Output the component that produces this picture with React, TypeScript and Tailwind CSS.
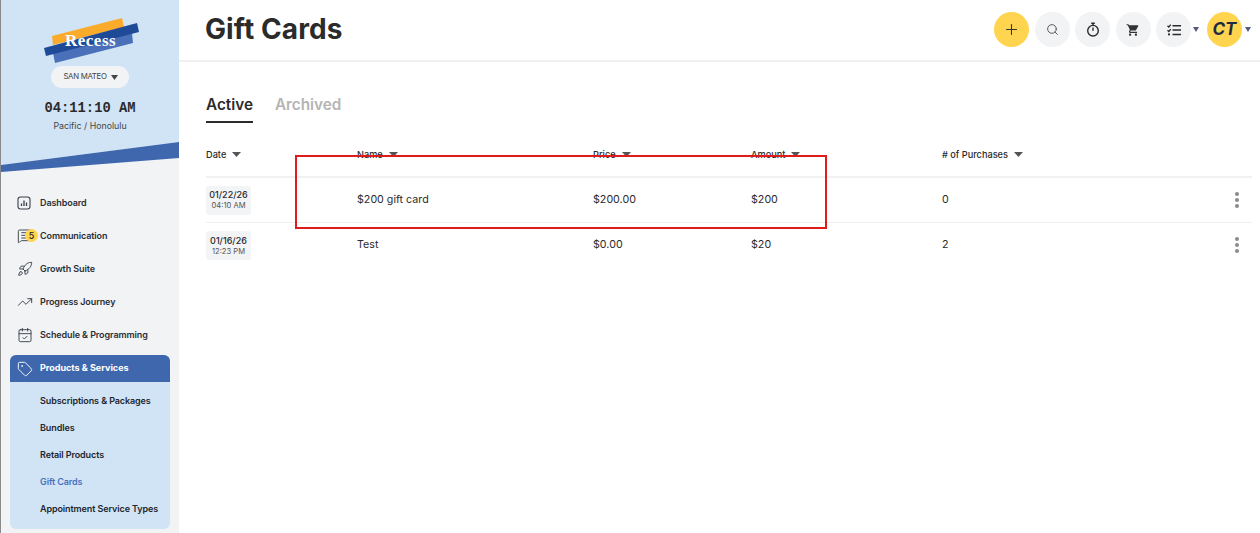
import { MessageSquareText, Plus, Rocket, Search, Tag, TrendingUp, CalendarCheck } from 'lucide-react';
import { MdShoppingCart } from 'react-icons/md';
import type { ReactNode } from 'react';

interface CardRow {
  date: string;
  time: string;
  name: string;
  price: string;
  amount: string;
  purchases: string;
}

const rows: CardRow[] = [
  { date: '01/22/26', time: '04:10 AM', name: '$200 gift card', price: '$200.00', amount: '$200', purchases: '0' },
  { date: '01/16/26', time: '12:23 PM', name: 'Test', price: '$0.00', amount: '$20', purchases: '2' },
];

const subItems = ['Subscriptions & Packages', 'Bundles', 'Retail Products', 'Gift Cards', 'Appointment Service Types'];

function DashboardIcon() {
  return (
    <svg width="14" height="14" viewBox="0 0 14 14" fill="none" stroke="#3a3f47" strokeWidth="1.1">
      <rect x="1" y="1" width="12" height="12" rx="2.5" />
      <path d="M4.5 10V7.5M7 10V4.5M9.5 10V6.5" strokeWidth="1.3" />
    </svg>
  );
}

function StopwatchIcon() {
  return (
    <svg width="14" height="15" viewBox="0 0 14 15" fill="none" stroke="#2b2b2b" strokeWidth="1.4">
      <circle cx="7" cy="8.7" r="5.3" />
      <path d="M5.2 1.2h3.6M7 1.2v2.2M7 8.7V5.6" />
    </svg>
  );
}

function ChecklistIcon() {
  return (
    <svg width="14" height="12" viewBox="0 0 14 12" fill="none" stroke="#2b2b2b" strokeWidth="1.3">
      <path d="M0.5 1.8 1.8 3 3.8 0.6M0.5 6.3 1.8 7.5 3.8 5.1" />
      <path d="M5.5 1.8H14M5.5 6H14M5.5 10.4H14" strokeWidth="1.5" />
      <circle cx="2" cy="10.4" r="1.1" fill="#2b2b2b" stroke="none" />
    </svg>
  );
}

function Caret({ className }: { className: string }) {
  return (
    <svg width="9" height="5" viewBox="0 0 8 4" className={className} preserveAspectRatio="none">
      <path d="M0 0h8L4 4z" fill="currentColor" />
    </svg>
  );
}

function NavItem({ icon, label, badge }: { icon: ReactNode; label: string; badge?: string }) {
  return (
    <div className="relative flex h-[33px] items-center pl-[16px]">
      <span className="flex w-[23px] items-center">{icon}</span>
      <span className="text-[9px] font-semibold tracking-[-0.1px] text-[#2b2f36]">{label}</span>
      {badge && (
        <span className="absolute left-[24px] top-[10px] flex h-[13px] w-[13px] items-center justify-center rounded-full bg-[#ffd44f] text-[9px] font-medium text-[#222]">
          {badge}
        </span>
      )}
    </div>
  );
}

function RoundButton({ children, yellow }: { children: ReactNode; yellow?: boolean }) {
  return (
    <div
      className={`flex h-[35px] w-[35px] items-center justify-center rounded-full ${yellow ? 'bg-[#ffd44f]' : 'bg-[#f2f3f5]'}`}
    >
      {children}
    </div>
  );
}

function HeaderCell({ label }: { label: string }) {
  return (
    <div className="flex items-center gap-[6px]">
      <span className="text-[9.2px] font-medium text-[#2b2b2b]">{label}</span>
      <Caret className="text-[#555]" />
    </div>
  );
}

export default function App() {
  return (
    <div className="flex h-[533px] w-[1260px] overflow-hidden bg-white font-['Inter',sans-serif] text-[#2b2b2b]">
      <aside className="flex h-full w-[179px] shrink-0 flex-col border-l border-[#8a8a8a] bg-[#f1f3f5]">
        <div className="shrink-0 bg-[#d1e4f6]">
          <div className="flex h-[142px] flex-col items-center">
            <div className="relative ml-[2px] mt-[17px] h-[47px] w-[96px]">
              <svg width="96" height="47" viewBox="43 17 96 47" className="block">
                <path d="M52 36 122 18 124 27 53 45z" fill="#fbab2c" />
                <path d="M53 53 132 33 133 43 55 63z" fill="#4a70b9" />
                <path d="M44 48 137 23 139 32 46 56z" fill="#1e4a97" />
              </svg>
              <span className="absolute left-[22px] top-[15px] font-['Liberation_Serif',serif] text-[17px] font-bold leading-none tracking-[0.5px] text-white">
                Recess
              </span>
            </div>
            <div className="mt-[2px] flex h-[22px] w-[78px] items-center justify-center gap-[4px] rounded-full bg-[#f1f3f5] pl-[1px]">
              <span className="text-[7.8px] tracking-[-0.3px] text-[#444]">SAN MATEO</span>
              <Caret className="w-[7px] text-[#444]" />
            </div>
            <div className="mt-[12px] font-['Liberation_Mono',monospace] text-[13.8px] font-bold leading-[18px] text-[#2b2b2b]">
              04:11:10 AM
            </div>
            <div className="mt-[2px] text-[8.8px] leading-[12px] text-[#444]">Pacific / Honolulu</div>
          </div>
          <svg width="178" height="30" viewBox="0 0 178 30" className="block">
            <path d="M0 30V23L178 0V30z" fill="#f1f3f5" />
            <path d="M0 23 178 0V16L0 30z" fill="#3f67ae" />
          </svg>
        </div>

        <nav className="mt-[14px] flex flex-col">
          <NavItem icon={<DashboardIcon />} label="Dashboard" />
          <NavItem icon={<MessageSquareText size={16} strokeWidth={1.4} color="#3a3f47" />} label="Communication" badge="5" />
          <NavItem icon={<Rocket size={16} strokeWidth={1.4} color="#3a3f47" />} label="Growth Suite" />
          <NavItem icon={<TrendingUp size={16} strokeWidth={1.4} color="#3a3f47" />} label="Progress Journey" />
          <NavItem icon={<CalendarCheck size={16} strokeWidth={1.4} color="#3a3f47" />} label="Schedule & Programming" />
        </nav>

        <div className="ml-[9px] mt-[4px] w-[160px] overflow-hidden rounded-[6px] bg-[#d1e4f6]">
          <div className="flex h-[27px] items-center bg-[#3f67ae] pl-[7px] text-white">
            <span className="flex w-[23px] items-center">
              <Tag size={16} strokeWidth={1.4} />
            </span>
            <span className="pb-[1px] text-[9px] font-bold">Products &amp; Services</span>
          </div>
          <div className="flex flex-col pb-[7px] pt-[5px]">
            {subItems.map((item) => (
              <div
                key={item}
                className={`flex h-[27px] items-center pl-[30px] text-[9px] font-semibold tracking-[-0.1px] ${item === 'Gift Cards' ? 'text-[#4a70b9]' : 'text-[#22262c]'}`}
              >
                {item}
              </div>
            ))}
          </div>
        </div>
      </aside>

      <main className="relative min-w-0 flex-1">
        <header className="flex h-[62px] items-center justify-between border-b-2 border-[#f0f0f0] pl-[26px] pr-[9px]">
          <h1 className="pb-[2px] text-[28px] font-bold tracking-[0.1px] text-[#2b2b2b]">Gift Cards</h1>
          <div className="flex items-center pb-[1px]">
            <div className="flex items-center gap-[5.5px]">
              <RoundButton yellow>
                <Plus size={17} strokeWidth={1.5} color="#333" />
              </RoundButton>
              <RoundButton>
                <Search size={13} strokeWidth={1.6} color="#444" />
              </RoundButton>
              <RoundButton>
                <StopwatchIcon />
              </RoundButton>
              <RoundButton>
                <MdShoppingCart size={14} color="#333" />
              </RoundButton>
              <RoundButton>
                <ChecklistIcon />
              </RoundButton>
            </div>
            <Caret className="ml-[2px] w-[6px] text-[#555a80]" />
            <div className="ml-[8px]">
              <div className="flex h-[35px] w-[35px] items-center justify-center rounded-full bg-[#ffd44f] text-[17px] font-bold italic text-[#1e2a44]">
                CT
              </div>
            </div>
            <Caret className="ml-[3px] w-[6px] text-[#555a80]" />
          </div>
        </header>

        <div className="pl-[27px] pr-[8px]">
          <div className="mt-[31px] flex gap-[22px]">
            <div className="border-b-2 border-[#2b2b2b] pb-[5px] text-[15.3px] font-semibold leading-[23px]">Active</div>
            <div className="text-[15.3px] font-semibold leading-[23px] text-[#b4b4b4]">Archived</div>
          </div>

          <div className="mt-[21px] grid h-[32px] grid-cols-[151px_236px_158px_191px_1fr] items-center pb-[10px]">
            <HeaderCell label="Date" />
            <HeaderCell label="Name" />
            <HeaderCell label="Price" />
            <HeaderCell label="Amount" />
            <HeaderCell label="# of Purchases" />
          </div>
          <div className="border-t-2 border-[#f1f1f1]">
            {rows.map((row, i) => (
              <div
                key={row.date}
                className={`grid h-[45px] grid-cols-[151px_236px_158px_191px_1fr] items-center text-[10.7px] ${i === 0 ? 'border-b border-[#efefef]' : ''}`}
              >
                <div className="flex h-[29px] w-[45px] flex-col items-center justify-center rounded-[3px] bg-[#f3f4f6]">
                  <span className="text-[9px] font-medium leading-[11px]">{row.date}</span>
                  <span className="text-[7.6px] leading-[11px] text-[#555]">{row.time}</span>
                </div>
                <div>{row.name}</div>
                <div>{row.price}</div>
                <div>{row.amount}</div>
                <div className="flex items-center justify-between pr-[13px]">
                  <span>{row.purchases}</span>
                  <span className="flex flex-col gap-[2px]">
                    <span className="h-[4px] w-[4px] rounded-full bg-[#8b8b8b]" />
                    <span className="h-[4px] w-[4px] rounded-full bg-[#8b8b8b]" />
                    <span className="h-[4px] w-[4px] rounded-full bg-[#8b8b8b]" />
                  </span>
                </div>
              </div>
            ))}
          </div>
        </div>

        <div className="pointer-events-none absolute left-[116px] top-[155px] h-[74px] w-[532px] border-2 border-[#e01b1b]" />
      </main>
    </div>
  );
}
